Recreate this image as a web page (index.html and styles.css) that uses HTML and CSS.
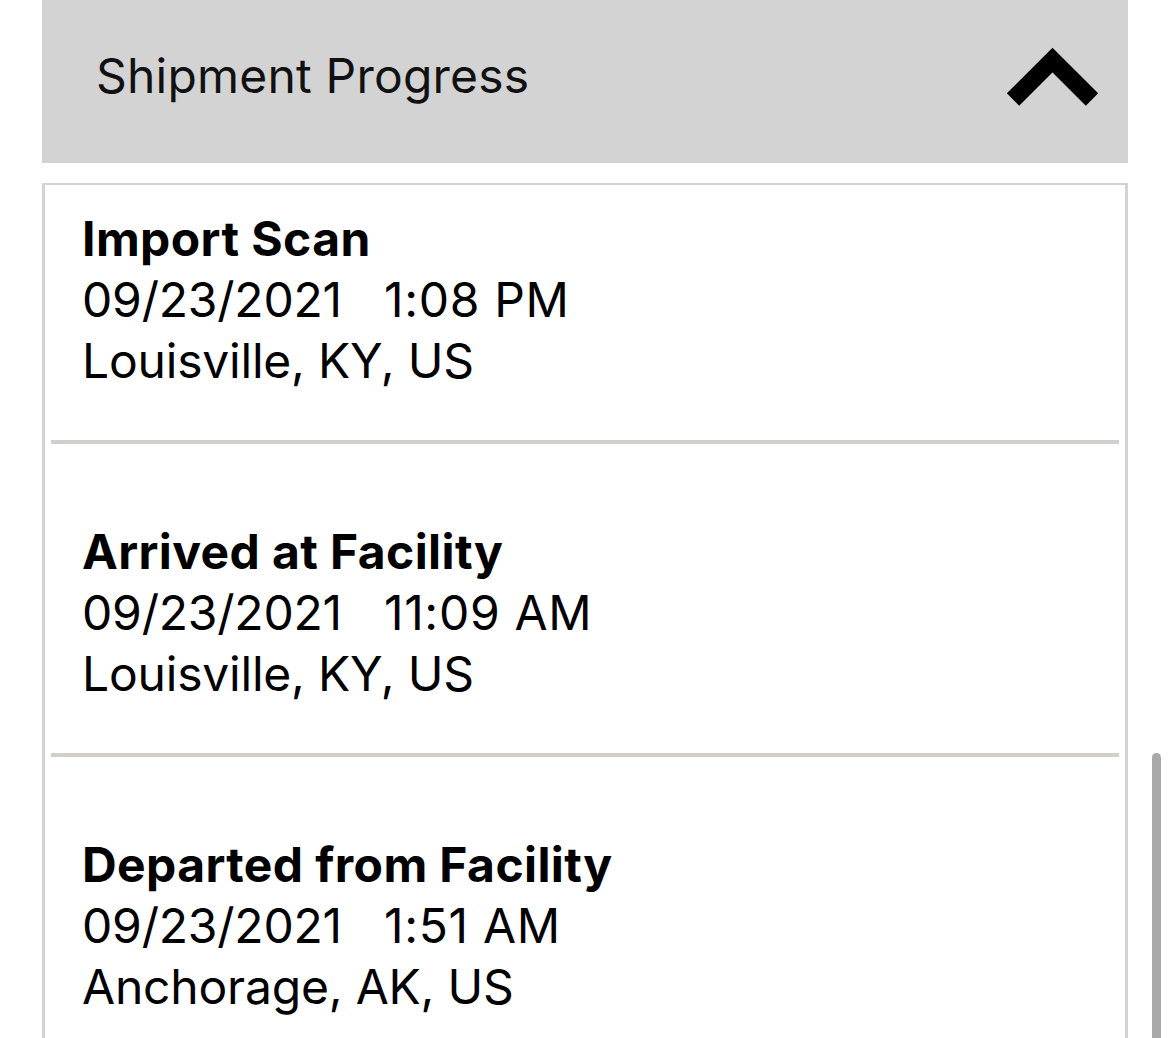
FILE: index.html
```html
<!DOCTYPE html>
<html lang="en">
<head>
<meta charset="utf-8">
<title>Shipment Progress</title>
<link rel="stylesheet" href="styles.css">
</head>
<body>
<div class="page">
  <div class="panel">
    <div class="panel-header">
      <span class="panel-title">Shipment Progress</span>
      <svg class="chevron" width="100" height="70" viewBox="0 0 100 70" aria-hidden="true">
        <polyline points="10,55.5 49.5,16 89,55.5" fill="none" stroke="#000" stroke-width="17.5" stroke-linejoin="miter" stroke-linecap="butt"/>
      </svg>
    </div>
    <ul class="events">
      <li class="event">
        <div class="event-title">Import Scan</div>
        <div class="event-line">09/23/2021<span class="event-time">1:08 PM</span></div>
        <div class="event-line">Louisville, KY, US</div>
      </li>
      <li class="event">
        <div class="event-title">Arrived at Facility</div>
        <div class="event-line">09/23/2021<span class="event-time">11:09 AM</span></div>
        <div class="event-line">Louisville, KY, US</div>
      </li>
      <li class="event">
        <div class="event-title">Departed from Facility</div>
        <div class="event-line">09/23/2021<span class="event-time">1:51 AM</span></div>
        <div class="event-line">Anchorage, AK, US</div>
      </li>
    </ul>
  </div>
  <div class="scroll-indicator"></div>
</div>
</body>
</html>
```

FILE: styles.css
```css
html, body {
  margin: 0;
  padding: 0;
  background: #ffffff;
  height: 100%;
  overflow: hidden;
}

body {
  font-family: Inter, "Noto Sans", "Liberation Sans", sans-serif;
  color: #000;
}

.page {
  position: relative;
  height: 1038px;
}

.panel {
  margin-left: 42px;
  width: 1086px;
}

.panel-header {
  height: 163px;
  background: #d3d3d3;
  display: flex;
  align-items: flex-start;
  justify-content: space-between;
  box-sizing: border-box;
  padding: 0 25px 0 54px;
}

.panel-title {
  font-size: 48px;
  line-height: 61px;
  margin-top: 45px;
  letter-spacing: 0.2px;
  color: #111;
}

.chevron {
  margin-top: 44px;
  display: block;
}

.events {
  list-style: none;
  margin: 20px 0 0;
  padding: 0 6px;
  border: 3px solid #d3d3d3;
  border-top-width: 2px;
  border-bottom: none;
  height: 1100px;
  box-sizing: border-box;
}

.event {
  padding: 77px 0 49px 31px;
  border-bottom: 4px solid #d2cec9;
}

.event:first-child {
  padding-top: 23px;
}

.event-title {
  font-size: 48px;
  line-height: 61px;
  font-weight: 700;
  letter-spacing: 0.4px;
}

.event-line {
  font-size: 48px;
  line-height: 61px;
  font-weight: 400;
  letter-spacing: -0.2px;
}

.event-time {
  margin-left: 42px;
  letter-spacing: 0.7px;
}

.scroll-indicator {
  position: absolute;
  left: 1152px;
  top: 753px;
  width: 9px;
  height: 300px;
  background: #a9a9a9;
  border-radius: 4.5px;
}
```
